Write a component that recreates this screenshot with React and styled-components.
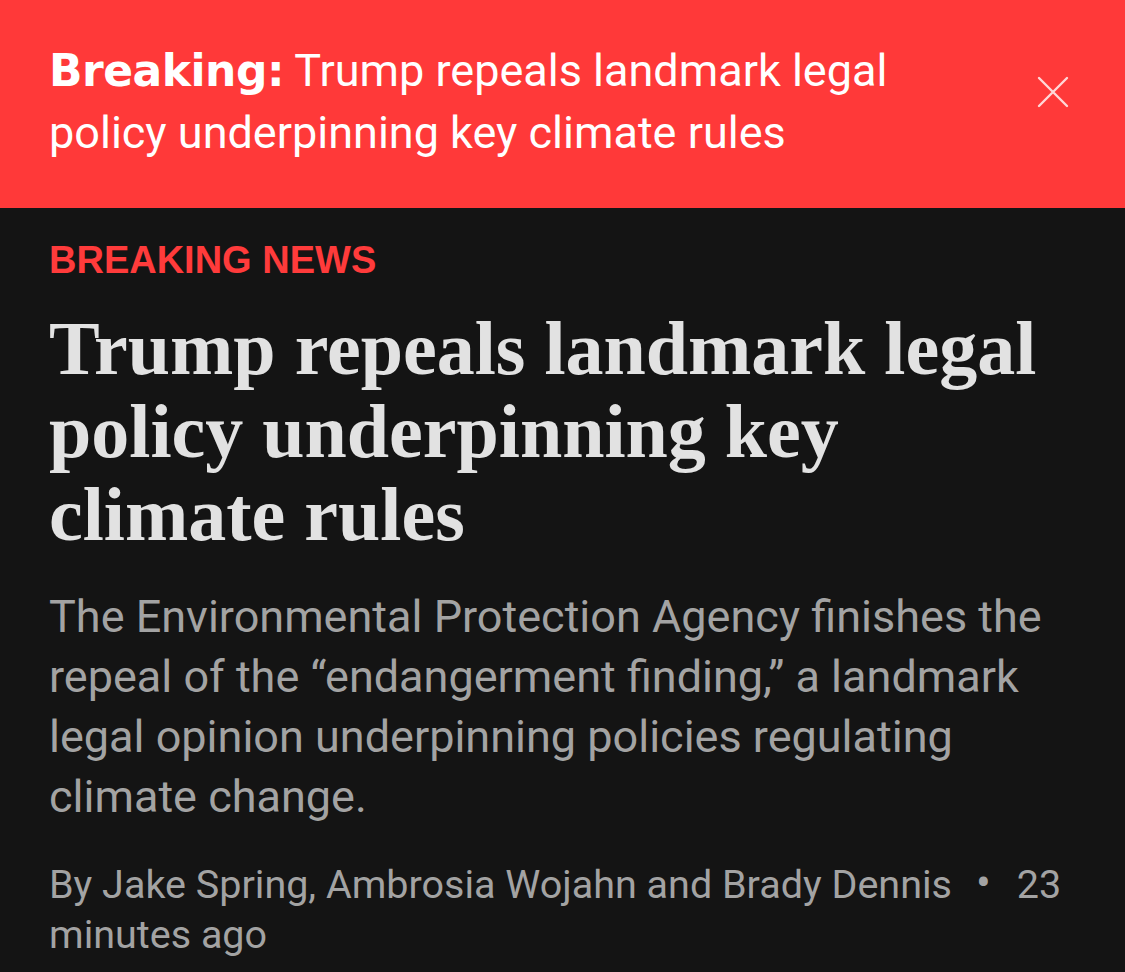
import React from "react";
import styled, { createGlobalStyle } from "styled-components";

const GlobalStyle = createGlobalStyle`
  html, body {
    margin: 0;
    padding: 0;
    background-color: #141414;
  }
`;

const Page = styled.div`
  width: 1125px;
  min-height: 972px;
  background-color: #141414;
  overflow: hidden;
`;

const Banner = styled.div`
  height: 208px;
  box-sizing: border-box;
  display: flex;
  align-items: flex-start;
  justify-content: space-between;
  padding: 40px 56px 0 49px;
  background-color: #ff3939;
`;

const BannerText = styled.p`
  margin: 0;
  max-width: 900px;
  font-family: "Roboto", sans-serif;
  font-size: 45px;
  line-height: 62px;
  color: #fff;
`;

const BannerLabel = styled.strong`
  font-family: "DejaVu Sans", sans-serif;
  font-weight: 700;
  font-size: 44px;
  letter-spacing: -0.5px;
`;

const CloseButton = styled.button`
  margin-top: 36px;
  width: 32px;
  height: 32px;
  padding: 0;
  border: none;
  background: none;
  color: rgba(255, 255, 255, 0.8);
  cursor: pointer;
`;

const Article = styled.div`
  display: flex;
  flex-direction: column;
  padding: 30px 49px 0 49px;
`;

const Kicker = styled.div`
  font-family: "Liberation Sans", sans-serif;
  font-weight: 700;
  font-size: 38px;
  line-height: 44px;
  color: #ff3b3b;
`;

const Headline = styled.h1`
  margin: 25px 0 0 0;
  font-family: "Liberation Serif", serif;
  font-weight: 700;
  font-size: 76px;
  line-height: 83px;
  color: #e2e2e2;
`;

const Summary = styled.p`
  margin: 31px 0 0 0;
  font-family: "Roboto", sans-serif;
  font-size: 45px;
  line-height: 60px;
  color: #a3a3a3;
`;

const Byline = styled.p`
  margin: 31px 0 0 0;
  font-family: "Roboto", sans-serif;
  font-size: 39.5px;
  line-height: 50px;
  color: #a3a3a3;
`;

const Dot = styled.span`
  margin: 0 26px 0 24px;
  font-size: 44px;
`;

function CloseIcon() {
  return (
    <svg width="32" height="32" viewBox="0 0 32 32" fill="none">
      <path d="M2 2 L30 30 M30 2 L2 30" stroke="currentColor" strokeWidth="2.4" strokeLinecap="round" />
    </svg>
  );
}

export default function App() {
  return (
    <Page>
      <GlobalStyle />
      <Banner>
        <BannerText>
          <BannerLabel>Breaking:</BannerLabel> Trump repeals landmark legal policy underpinning key climate rules
        </BannerText>
        <CloseButton aria-label="Close">
          <CloseIcon />
        </CloseButton>
      </Banner>
      <Article>
        <Kicker>BREAKING NEWS</Kicker>
        <Headline>Trump repeals landmark legal policy underpinning key climate rules</Headline>
        <Summary>
          The Environmental Protection Agency finishes the repeal of the “endangerment finding,” a landmark legal
          opinion underpinning policies regulating climate change.
        </Summary>
        <Byline>
          By Jake Spring, Ambrosia Wojahn and Brady Dennis<Dot>•</Dot>23 minutes ago
        </Byline>
      </Article>
    </Page>
  );
}
